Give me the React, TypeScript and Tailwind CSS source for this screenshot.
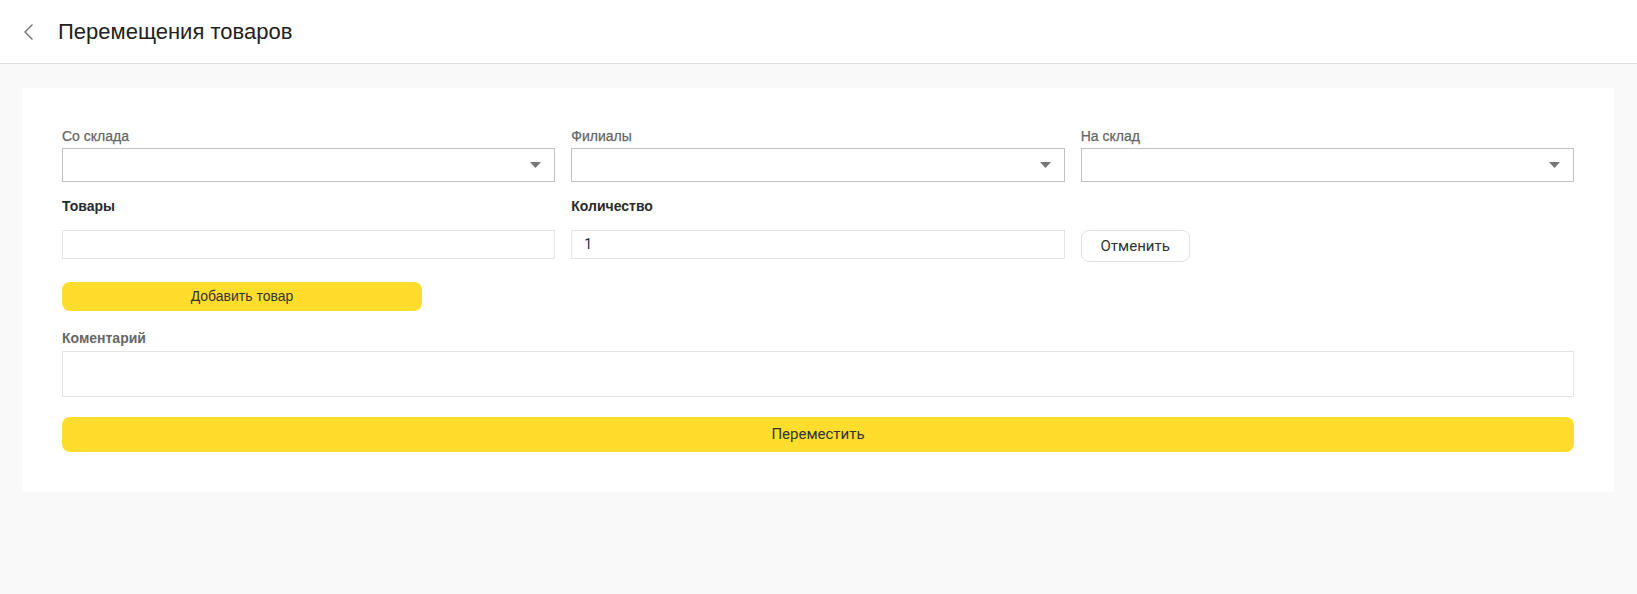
import React from "react";

function SelectBox() {
  return (
    <div className="flex h-[34px] items-center justify-end border border-[#c2c2c2] bg-white pr-[13px]">
      <svg width="11" height="6" viewBox="0 0 11 6" className="text-[#767676]">
        <path d="M0 0h11L5.5 6z" fill="currentColor" />
      </svg>
    </div>
  );
}

function FieldLabel({ children }: { children: React.ReactNode }) {
  return (
    <p className="mb-[3px] text-[14px] leading-[18px] text-[#666] [-webkit-text-stroke:0.25px_#666]">
      {children}
    </p>
  );
}

export default function App() {
  return (
    <div className="min-h-[594px] bg-[#f9f9f9] font-['Roboto',sans-serif] text-[#333]">
      <header className="flex h-16 items-center border-b border-[#dedede] bg-white">
        <button type="button" className="ml-[21px] flex h-8 w-[14px] items-center justify-center text-[#707070]">
          <svg width="11" height="18" viewBox="0 0 11 18" fill="none">
            <path d="M9.5 1.5L2 9l7.5 7.5" stroke="currentColor" strokeWidth="1.4" />
          </svg>
        </button>
        <h1 className="ml-[23px] font-['Liberation_Sans',sans-serif] text-[22px] leading-none text-[#222]">
          Перемещения товаров
        </h1>
      </header>

      <main className="mt-6 ml-[22px] mr-[23px] bg-white px-10 pt-[39px] pb-10">
        <div className="grid grid-cols-3 gap-x-4 font-['Liberation_Sans',sans-serif]">
          <div>
            <FieldLabel>Со склада</FieldLabel>
            <SelectBox />
          </div>
          <div>
            <FieldLabel>Филиалы</FieldLabel>
            <SelectBox />
          </div>
          <div>
            <FieldLabel>На склад</FieldLabel>
            <SelectBox />
          </div>
        </div>

        <div className="mt-[14px] grid grid-cols-3 gap-x-4">
          <p className="font-['Liberation_Sans',sans-serif] text-[14px] leading-5 font-bold text-[#2b2b2b]">
            Товары
          </p>
          <p className="font-['Liberation_Sans',sans-serif] text-[14px] leading-5 font-bold text-[#2b2b2b]">
            Количество
          </p>
          <div />
          <div className="mt-[14px] h-[29px] border border-[#e4e4e4] bg-white" />
          <div className="mt-[14px] flex h-[29px] items-center border border-[#e4e4e4] bg-white px-[12px] text-[14px] text-[#1f2d3d]">
            1
          </div>
          <div className="mt-[14px]">
            <button
              type="button"
              className="h-[32px] w-[109px] rounded-lg border border-[#e2e2e2] bg-white text-[15px] text-[#333]"
            >
              Отменить
            </button>
          </div>
        </div>

        <button
          type="button"
          className="mt-5 h-[29px] w-[360px] rounded-lg bg-[#ffdd2d] font-['Liberation_Sans',sans-serif] text-[14px] text-[#333]"
        >
          Добавить товар
        </button>

        <p className="mt-[17px] mb-[3px] font-['Liberation_Sans',sans-serif] text-[14px] leading-5 font-bold text-[#666]">
          Коментарий
        </p>
        <div className="h-[46px] border border-[#e4e4e4] bg-white" />

        <button
          type="button"
          className="mt-5 h-[35px] w-full rounded-lg bg-[#ffdd2d] text-[15px] text-[#333]"
        >
          Переместить
        </button>
      </main>
    </div>
  );
}
